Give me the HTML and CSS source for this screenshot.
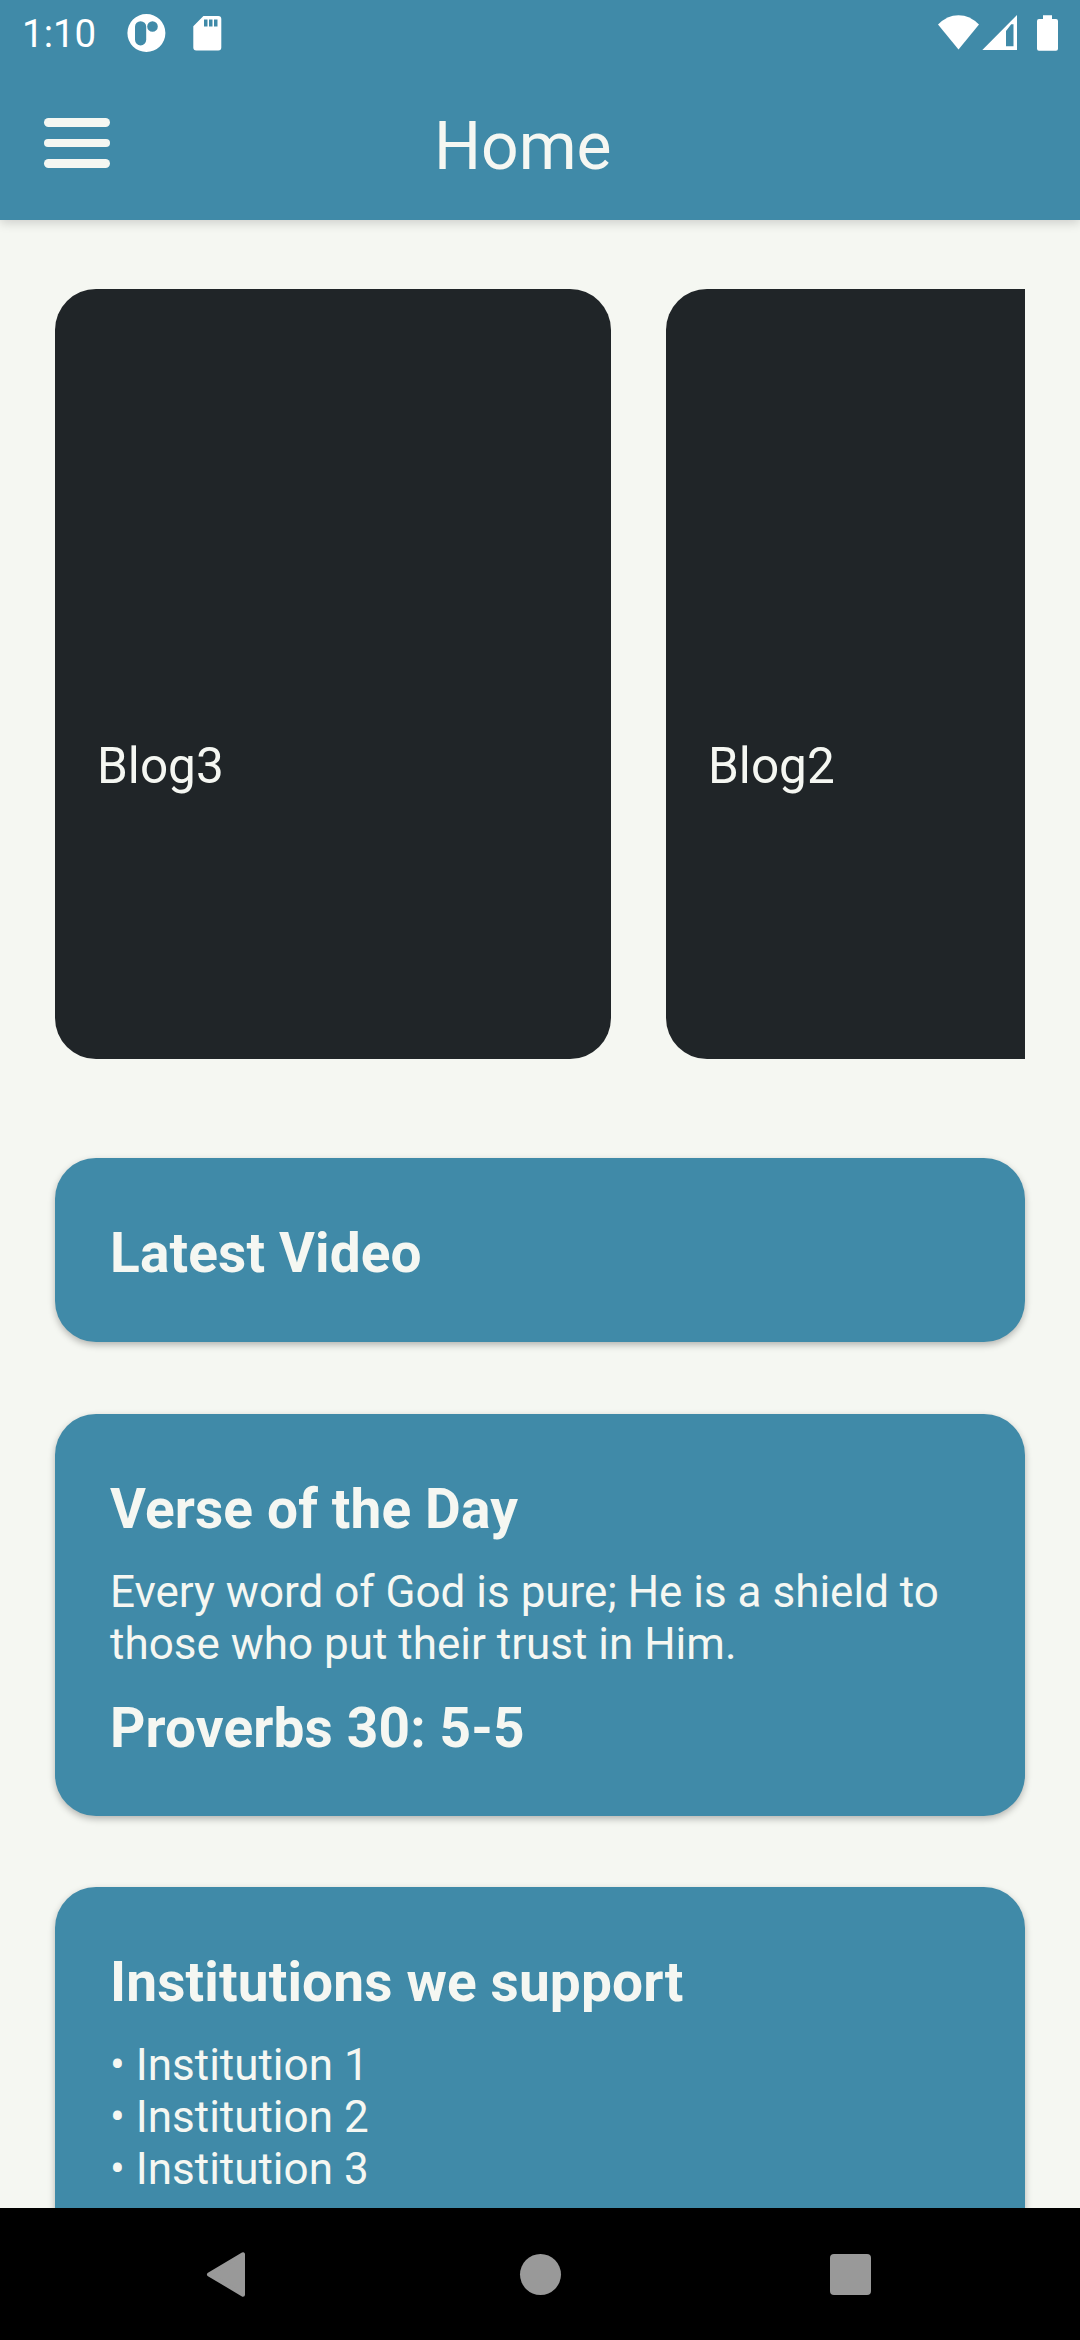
FILE: index.html
```html
<!DOCTYPE html>
<html lang="en">
<head>
<meta charset="utf-8">
<title>Home</title>
<link rel="stylesheet" href="styles.css">
</head>
<body>
<div class="screen">
  <header class="top">
    <div class="status">
      <span class="clock">1:10</span>
      <svg class="status-left" width="100" height="66" viewBox="124 0 100 66">
        <path fill="#fff" fill-rule="evenodd" d="M146.4 14a19 19 0 1 1 0 38a19 19 0 1 1 0-38zM140.6 21.2a5.6 5.6 0 0 0-5.6 5.6v13a5.6 5.6 0 0 0 11.2 0v-13a5.6 5.6 0 0 0-5.6-5.6zM152.5 21.2a5.3 5.3 0 1 0 0 10.6a5.3 5.3 0 1 0 0-10.6z"/>
        <path fill="#fff" fill-rule="evenodd" d="M203.4 16h14.9a3 3 0 0 1 3 3v28.5a3 3 0 0 1-3 3h-22a3 3 0 0 1-3-3V26.200zM204 19.500v7h3.500v-7zM209 19.500v7h3.500v-7zM214 19.500v7h3.500v-7z"/>
      </svg>
      <svg class="status-right" width="124" height="66" viewBox="934 0 124 66">
        <path fill="#fff" d="M958.500 49.600L938 24.600Q947 15.200 958.500 15.200T979 24.600z"/>
        <path fill="#fff" fill-rule="evenodd" d="M982.300 50L1017 15v35zM1006 31v15.300h7.500V24.300h-2.300z"/>
        <path fill="#fff" d="M1043 15.300h9V19h4a2 2 0 0 1 2 2v27.800a2 2 0 0 1-2 2h-17a2 2 0 0 1-2-2V21a2 2 0 0 1 2-2h4z"/>
      </svg>
    </div>
    <div class="appbar">
      <div class="menu"><i class="bar"></i><i class="bar"></i><i class="bar"></i></div>
      <h1 class="title">Home</h1>
    </div>
  </header>
  <main class="content">
    <section class="carousel">
      <article class="blog">Blog3</article>
      <article class="blog">Blog2</article>
    </section>
    <section class="card video">
      <h2 class="heading">Latest Video</h2>
    </section>
    <section class="card verse">
      <h2 class="heading">Verse of the Day</h2>
      <p class="body">Every word of God is pure; He is a shield to<br>those who put their trust in Him.</p>
      <h2 class="heading">Proverbs 30: 5-5</h2>
    </section>
    <section class="card support">
      <h2 class="heading">Institutions we support</h2>
      <p class="body">• Institution 1<br>• Institution 2<br>• Institution 3</p>
    </section>
  </main>
  <nav class="navbar">
    <svg width="40" height="46" viewBox="0 0 40 46"><path fill="#999" stroke="#999" stroke-width="4" stroke-linejoin="round" d="M37 3.300v40.400L3 23.500z"/></svg>
    <i class="home"></i>
    <i class="recent"></i>
  </nav>
</div>
</body>
</html>
```

FILE: styles.css
```css
* { box-sizing: border-box; margin: 0; padding: 0; }
body { background: #f5f7f2; }
.screen {
  width: 1080px;
  height: 2340px;
  display: flex;
  flex-direction: column;
  overflow: hidden;
  background: #f5f7f2;
  color: #f5f7f2;
  font-family: Roboto, sans-serif;
}
.top {
  flex: none;
  height: 220px;
  background: #408aa8;
  box-shadow: 0 3px 10px rgba(0, 0, 0, .16);
}
.status {
  height: 66px;
  display: flex;
  padding: 0 22px;
}
.clock {
  width: 102px;
  color: #fff;
  font-size: 38.500px;
  line-height: 68px;
  white-space: nowrap;
}
.status-right { margin-left: auto; }
.appbar {
  height: 154px;
  display: flex;
  align-items: flex-start;
  padding-left: 44px;
}
.menu {
  width: 66px;
  margin-top: 52px;
  margin-right: 324px;
  display: flex;
  flex-direction: column;
  gap: 12px;
}
.bar { height: 8.700px; border-radius: 5px; background: #f5f7f2; }
.title {
  margin-top: 42px;
  font-size: 66px;
  font-weight: 400;
  line-height: 78px;
}
.content {
  flex: 1;
  min-height: 0;
  overflow: hidden;
  margin-top: 20px;
  padding: 49px 0 0;
}
.carousel {
  display: flex;
  gap: 55px;
  margin: 0 55px 99px;
  overflow: hidden;
}
.blog {
  flex: none;
  width: 556px;
  height: 770px;
  padding: 448px 42px 0;
  border-radius: 41px;
  background: #202528;
  font-size: 49.500px;
  line-height: 58px;
}
.card {
  margin: 0 55px 71px;
  padding: 63px 55px 56px;
  border-radius: 41px;
  background: #408aa8;
  box-shadow: 0 3px 7px rgba(0, 0, 0, .27);
}
.video { padding-bottom: 57px; margin-bottom: 72px; }
.heading {
  font-size: 55px;
  font-weight: 700;
  line-height: 64px;
  letter-spacing: .13px;
}
.body {
  margin: 25px 0 26px;
  font-size: 44px;
  line-height: 52px;
  white-space: nowrap;
}
.navbar {
  flex: none;
  height: 132px;
  display: flex;
  align-items: center;
  justify-content: space-between;
  padding: 0 209px 0 206px;
  background: #000;
}
.home { width: 41px; height: 41px; margin-left: 4px; border-radius: 50%; background: #999; }
.recent { width: 41px; height: 41px; border-radius: 4px; background: #999; }
```
